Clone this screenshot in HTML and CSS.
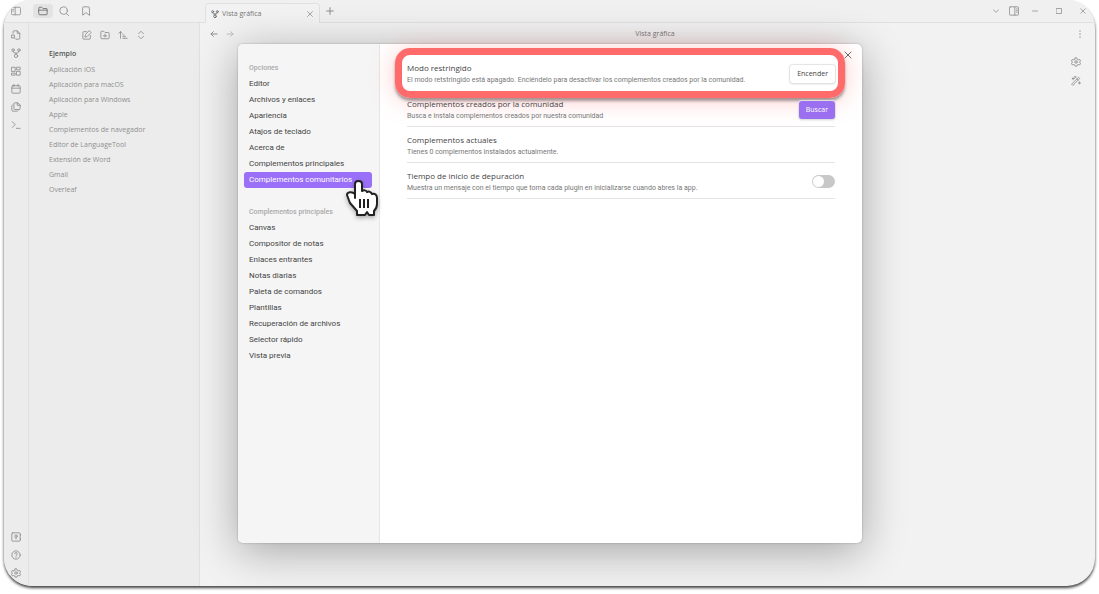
FILE: index.html
```html
<!DOCTYPE html>
<html lang="es">
<head>
<meta charset="utf-8">
<title>Vista gráfica</title>
<link rel="stylesheet" href="styles.css">
</head>
<body>
<div class="window">
  <header class="titlebar">
    <div class="titlebar-left">
      <button class="icon-btn" aria-label="Contraer barra"><svg viewBox="0 0 24 24"><rect x="1" y="3" width="22" height="18" rx="3"/><path d="M10 3v18M4 8h2M4 12h2"/></svg></button>
      <button class="icon-btn folder" aria-label="Archivos"><svg viewBox="0 0 24 24"><path d="M2 10V5a2 2 0 0 1 2-2h5l3 3h8a2 2 0 0 1 2 2v2M2 10h20v9a2 2 0 0 1-2 2H4a2 2 0 0 1-2-2z"/></svg></button>
      <button class="icon-btn search" aria-label="Buscar"><svg viewBox="0 0 24 24"><circle cx="11" cy="11" r="9"/><path d="m23 23-5-5"/></svg></button>
      <button class="icon-btn" aria-label="Marcadores"><svg viewBox="0 0 24 24"><path d="m20 22-8-6-8 6V4a2 2 0 0 1 2-2h12a2 2 0 0 1 2 2z"/></svg></button>
    </div>
    <div class="tabs">
      <div class="tab">
        <svg class="icon small" viewBox="0 0 24 24"><circle cx="5" cy="5" r="3"/><circle cx="19" cy="5" r="3"/><circle cx="12" cy="19" r="4"/><path d="M5 8c0 4 4 4 7 4s7 0 7-4M12 12v3"/></svg>
        <span class="tab-name">Vista gráfica</span>
        <button class="icon-btn" aria-label="Cerrar pestaña"><svg class="tiny" viewBox="0 0 24 24"><path d="m2 2 20 20M22 2 2 22"/></svg></button>
      </div>
      <button class="icon-btn add" aria-label="Nueva pestaña"><svg class="small" viewBox="0 0 24 24"><path d="M12 2v20M2 12h20"/></svg></button>
    </div>
    <div class="window-controls">
      <button class="icon-btn" aria-label="Lista"><svg class="tiny" viewBox="0 0 24 24"><path d="m2 8 10 9 10-9"/></svg></button>
      <button class="icon-btn" aria-label="Panel derecho"><svg viewBox="0 0 24 24"><rect x="1" y="2" width="22" height="20" rx="2"/><path d="M14 2v20M18 7h2m-2 4h2m-2 4h2"/></svg></button>
      <button class="icon-btn" aria-label="Minimizar"><svg class="tiny" viewBox="0 0 24 24"><path d="M2 12h20"/></svg></button>
      <button class="icon-btn" aria-label="Maximizar"><svg class="tiny" viewBox="0 0 24 24"><path d="M2 2h20v20H2z"/></svg></button>
      <button class="icon-btn" aria-label="Cerrar"><svg class="tiny" viewBox="0 0 24 24"><path d="m3 3 18 18M21 3 3 21"/></svg></button>
    </div>
  </header>
  <div class="workspace">
    <nav class="ribbon">
      <button class="icon-btn" aria-label="Abrir nota"><svg viewBox="0 0 24 24"><path d="M5 8V4a2 2 0 0 1 2-2h8l6 6v12a2 2 0 0 1-2 2h-6M15 2v6h6"/><path d="M2 12h6v7H2zM8 19l3 3"/></svg></button>
      <button class="icon-btn" aria-label="Vista gráfica"><svg viewBox="0 0 24 24"><circle cx="5" cy="5" r="3"/><circle cx="19" cy="5" r="3"/><circle cx="12" cy="19" r="4"/><path d="M5 8c0 4 4 4 7 4s7 0 7-4M12 12v3"/></svg></button>
      <button class="icon-btn" aria-label="Canvas"><svg viewBox="0 0 24 24"><path d="M2 3h8v10H2zM14 3h8v6h-8zM14 13h8v9h-8zM2 17h8v5H2z"/></svg></button>
      <button class="icon-btn" aria-label="Nota diaria"><svg viewBox="0 0 24 24"><rect x="2" y="4" width="20" height="18" rx="2"/><path d="M7 1v5m10-5v5M2 10h20"/></svg></button>
      <button class="icon-btn" aria-label="Plantillas"><svg viewBox="0 0 24 24"><path d="M15 2H9a2 2 0 0 0-2 2v12a2 2 0 0 0 2 2h11a2 2 0 0 0 2-2V8zM15 2v6h7M3 7a2 2 0 0 0-1 2v11a2 2 0 0 0 2 2h11a2 2 0 0 0 2-1"/></svg></button>
      <button class="icon-btn" aria-label="Comandos"><svg viewBox="0 0 24 24"><path d="m3 18 7-7-7-7M13 20h9"/></svg></button>
      <span class="spacer"></span>
      <button class="icon-btn" aria-label="Bóveda"><svg viewBox="0 0 24 24"><rect x="2" y="2" width="20" height="20" rx="2"/><circle cx="12" cy="10" r="3"/><path d="M12 13v4M23 6v2m0 8v2"/></svg></button>
      <button class="icon-btn" aria-label="Ayuda"><svg viewBox="0 0 24 24"><circle cx="12" cy="12" r="10"/><path d="M9 9a3 3 0 0 1 6 0c0 2-3 3-3 5m0 3v1"/></svg></button>
      <button class="icon-btn" aria-label="Ajustes"><svg viewBox="0 0 24 24"><path d="M10 2h4l1 4 2 1 4-1 2 4-3 2 3 3-2 4-4-1-2 1-1 3h-4l-1-3-2-1-4 1-2-4 3-3-3-2 2-4 4 1 2-1z"/><circle cx="12" cy="12" r="3"/></svg></button>
    </nav>
    <aside class="explorer">
      <div class="explorer-actions">
        <button class="icon-btn" aria-label="Nueva nota"><svg viewBox="0 0 24 24"><path d="M11 4H4a2 2 0 0 0-2 2v14a2 2 0 0 0 2 2h14a2 2 0 0 0 2-2v-7M18 2l4 4-10 10-5 1 1-5z"/></svg></button>
        <button class="icon-btn" aria-label="Nueva carpeta"><svg viewBox="0 0 24 24"><path d="M4 21a2 2 0 0 1-2-2V5a2 2 0 0 1 2-2h5l3 3h8a2 2 0 0 1 2 2v11a2 2 0 0 1-2 2zM12 10v7M8 14h8"/></svg></button>
        <button class="icon-btn" aria-label="Ordenar"><svg viewBox="0 0 24 24"><path d="M6 20V4M2 8l4-4 4 4M12 12h3m-3 4h6m-6 4h10"/></svg></button>
        <button class="icon-btn" aria-label="Expandir"><svg viewBox="0 0 24 24"><path d="m6 9 6-6 6 6M6 15l6 6 6-6"/></svg></button>
      </div>
      <h2 class="vault">Ejemplo</h2>
      <ul class="files">
        <li><a href="#">Aplicación iOS</a></li>
        <li><a href="#">Aplicación para macOS</a></li>
        <li><a href="#">Aplicación para Windows</a></li>
        <li><a href="#">Apple</a></li>
        <li><a href="#">Complementos de navegador</a></li>
        <li><a href="#">Editor de LanguageTool</a></li>
        <li><a href="#">Extensión de Word</a></li>
        <li><a href="#">Gmail</a></li>
        <li><a href="#">Overleaf</a></li>
      </ul>
    </aside>
    <main class="view">
      <div class="view-header">
        <div class="history">
          <button class="icon-btn" aria-label="Atrás"><svg class="small" viewBox="0 0 24 24"><path d="M21 12H3m7-7-7 7 7 7"/></svg></button>
          <button class="icon-btn faded" aria-label="Adelante"><svg class="small" viewBox="0 0 24 24"><path d="M3 12h18m-7-7 7 7-7 7"/></svg></button>
        </div>
        <span class="view-title">Vista gráfica</span>
        <button class="icon-btn more" aria-label="Más opciones"><svg class="small" viewBox="0 0 24 24"><path d="M12 2v2m0 7v2m0 7v2"/></svg></button>
      </div>
      <div class="graph-tools">
        <button class="icon-btn" aria-label="Ajustes del gráfico"><svg viewBox="0 0 24 24"><path d="M10 2h4l1 4 2 1 4-1 2 4-3 2 3 3-2 4-4-1-2 1-1 3h-4l-1-3-2-1-4 1-2-4 3-3-3-2 2-4 4 1 2-1z"/><circle cx="12" cy="12" r="3"/></svg></button>
        <button class="icon-btn" aria-label="Animar"><svg viewBox="0 0 24 24"><path d="m2 19 16-16 3 3L5 22zM14 7l3 3M5 4v5M3 6h5M20 14v5m-2-2h5M10 1v3M9 2h3"/></svg></button>
      </div>
    </main>
  </div>

  <div class="overlay">
    <section class="modal" role="dialog" aria-label="Opciones">
      <nav class="settings-nav">
        <h3>Opciones</h3>
        <button>Editor</button>
        <button>Archivos y enlaces</button>
        <button>Apariencia</button>
        <button>Atajos de teclado</button>
        <button>Acerca de</button>
        <button>Complementos principales</button>
        <button class="selected">Complementos comunitarios</button>
        <svg class="cursor" viewBox="0 0 32 38"><path d="M9 19V5c0-4 7-4 7 0v7c2-1 4-1 5 1 2-1 4 0 5 2 3-1 5 1 5 4v6c0 4-2 6-3 7v4h-5l-2-3-2 3h-8v-4l-7-8-3-8c0-3 5-4 8-1z"/><path class="knuckles" d="M14 20v9m4-9v9m4-9v9"/></svg>
        <h3>Complementos principales</h3>
        <button>Canvas</button>
        <button>Compositor de notas</button>
        <button>Enlaces entrantes</button>
        <button>Notas diarias</button>
        <button>Paleta de comandos</button>
        <button>Plantillas</button>
        <button>Recuperación de archivos</button>
        <button>Selector rápido</button>
        <button>Vista previa</button>
      </nav>
      <div class="settings">
        <button class="icon-btn close" aria-label="Cerrar opciones"><svg class="small" viewBox="0 0 24 24"><path d="m3 3 18 18M21 3 3 21"/></svg></button>
        <div class="row highlighted">
          <div class="info"><h4>Modo restringido</h4><p>El modo retstringido está apagado. Enciéndelo para desactivar los complementos creados por la comunidad.</p></div>
          <button class="action">Encender</button>
        </div>
        <div class="row">
          <div class="info"><h4>Complementos creados por la comunidad</h4><p>Busca e instala complementos creados por nuestra comunidad</p></div>
          <button class="action primary">Buscar</button>
        </div>
        <div class="row">
          <div class="info"><h4>Complementos actuales</h4><p>Tienes 0 complementos instalados actualmente.</p></div>
        </div>
        <div class="row">
          <div class="info"><h4><label for="debug">Tiempo de inicio de depuración</label></h4><p>Muestra un mensaje con el tiempo que toma cada plugin en inicializarse cuando abres la app.</p></div>
          <input class="toggle" type="checkbox" id="debug">
        </div>
      </div>
    </section>
  </div>
</div>
</body>
</html>
```
FILE: styles.css
```css
* { box-sizing: border-box; }
body {
  margin: 0;
  background: #fff;
  font: 7px/16px "Open Sans", "Noto Sans", sans-serif;
  color: #777;
}
h2, h3, h4, p, ul { margin: 0; padding: 0; }
ul { list-style: none; }
a { color: inherit; text-decoration: none; }
button { border: 0; padding: 0; background: none; font: inherit; color: inherit; }
svg {
  display: block;
  width: 10px;
  height: 10px;
  fill: none;
  stroke: currentColor;
  stroke-width: 2;
  stroke-linecap: round;
  stroke-linejoin: round;
}
svg.small { width: 8px; height: 8px; stroke-width: 3; }
svg.tiny { width: 6px; height: 6px; stroke-width: 3; }
.icon-btn {
  display: flex;
  align-items: center;
  justify-content: center;
  flex: none;
  color: #8c8c8c;
}

.window {
  position: relative;
  display: flex;
  flex-direction: column;
  height: calc(100vh - 8px);
  margin: 0 4px 8px;
  border-radius: 28px;
  overflow: hidden;
  background: #f2f2f2;
  box-shadow: 0 2px 3px rgba(0, 0, 0, .75);
}
.titlebar {
  display: flex;
  flex: none;
  height: 23px;
  background: #f0f0f0;
  border-bottom: 1px solid #e0e0e0;
}
.titlebar-left {
  display: flex;
  align-items: center;
  gap: 12px;
  width: 201px;
  padding-left: 7px;
}
.titlebar-left .search { margin-left: -6px; }
.titlebar-left .folder {
  width: 20px;
  height: 14px;
  border-radius: 3px;
  background: #e3e3e3;
  color: #666;
}
.tabs { display: flex; flex: 1; align-items: center; gap: 6px; }
.tab {
  display: flex;
  align-items: center;
  gap: 3px;
  align-self: flex-end;
  width: 115px;
  height: 20px;
  margin-bottom: -1px;
  padding: 0 6px 0 5px;
  border: 1px solid #e0e0e0;
  border-bottom: 0;
  border-radius: 4px 4px 0 0;
  background: #f2f2f2;
}
.tab-name { flex: 1; }
.window-controls {
  display: flex;
  align-items: center;
  gap: 18px;
  padding-right: 9px;
}
.window-controls .icon-btn:nth-child(2) { margin: 0 -5px 0 -8px; }

.workspace { display: flex; flex: 1; min-height: 0; }
.ribbon {
  display: flex;
  flex-direction: column;
  align-items: center;
  gap: 8px;
  width: 25px;
  padding: 7px 0 8px;
  background: #ececec;
  border-right: 1px solid #e0e0e0;
}
.spacer { flex: 1; }
.explorer {
  width: 171px;
  padding: 7px 10px 0 20px;
  background: #ececec;
  border-right: 1px solid #e0e0e0;
}
.explorer-actions { display: flex; gap: 8px; padding: 0 0 6px 33px; }
.vault { font-size: 7px; line-height: 16px; font-weight: 600; color: #555; }
.files { color: #8f8f8f; line-height: 15px; }
.files a { display: block; }
.view { flex: 1; }
.view-header {
  display: grid;
  grid-template-columns: auto 1fr auto;
  align-items: center;
  height: 21px;
  padding: 0 11px 0 10px;
}
.view-title { text-align: center; }
.history { display: flex; gap: 8px; }
.faded { opacity: .5; }
.graph-tools {
  display: flex;
  flex-direction: column;
  align-items: flex-end;
  gap: 9px;
  padding: 13px 14px;
}

.overlay {
  position: absolute;
  inset: 0;
  display: flex;
  padding: 44px 233px 43px 234px;
}
.modal {
  display: flex;
  flex: 1;
  border-radius: 5px;
  background: #fff;
  box-shadow: 0 0 2px rgba(0, 0, 0, .3), 0 8px 44px rgba(0, 0, 0, .32);
}
.settings-nav {
  position: relative;
  display: flex;
  flex-direction: column;
  flex: none;
  width: 142px;
  padding: 16px 7px 16px 6px;
  border-right: 1px solid #e6e6e6;
  border-radius: 5px 0 0 5px;
  background: #f5f5f5;
  color: #444;
  font: 8px/16px Roboto, "Open Sans", sans-serif;
}
.settings-nav h3 {
  padding-left: 5px;
  font-size: 7px;
  font-weight: 500;
  color: #aaa;
}
.settings-nav h3:not(:first-child) { margin-top: 16px; }
.settings-nav button {
  height: 16px;
  padding-left: 5px;
  border-radius: 3px;
  text-align: left;
}
.settings-nav .selected { background: #9b70f8; color: #fff; }
.cursor {
  position: absolute;
  left: 108px;
  top: 134px;
  width: 32px;
  height: 40px;
  fill: #fff;
  stroke: #222;
  filter: drop-shadow(0 2px 2px rgba(0, 0, 0, .3));
}
.knuckles { stroke-linecap: butt; }

.settings {
  position: relative;
  flex: 1;
  padding: 11px 27px;
  color: #777;
}
.close { position: absolute; top: 7px; right: 10px; color: #666; }
.row {
  position: relative;
  display: flex;
  align-items: center;
  justify-content: space-between;
  height: 36px;
  padding-top: 2px;
  border-bottom: 1px solid #e3e3e3;
}
.row.highlighted { border-color: transparent; }
.row.highlighted::after {
  content: "";
  position: absolute;
  inset: -7px -10px -8px -12px;
  border: 7px solid #ff6b6b;
  border-radius: 15px;
  box-shadow: 0 3px 3px rgba(0, 0, 0, .35), 0 2px 24px rgba(255, 107, 107, .35);
  pointer-events: none;
}
.info h4 { font-size: 8px; font-weight: 400; line-height: 13px; color: #444; }
.info p { font: 7px/12px Roboto, "Open Sans", sans-serif; }
.action {
  height: 18px;
  padding: 0 7px;
  border-radius: 3px;
  background: #fff;
  color: #444;
  box-shadow: 0 0 1px 1px #e3e3e3, 0 1px 2px rgba(0, 0, 0, .2);
}
.action.primary { background: #9b70f0; color: #fff; }
.toggle {
  appearance: none;
  display: flex;
  align-items: center;
  width: 23px;
  height: 13px;
  margin: 0;
  padding: 1px;
  border-radius: 7px;
  background: #c8c8c8;
}
.toggle::before {
  content: "";
  width: 11px;
  height: 11px;
  border-radius: 50%;
  background: #fff;
}
.toggle:checked { justify-content: flex-end; background: #9b70f8; }
```
